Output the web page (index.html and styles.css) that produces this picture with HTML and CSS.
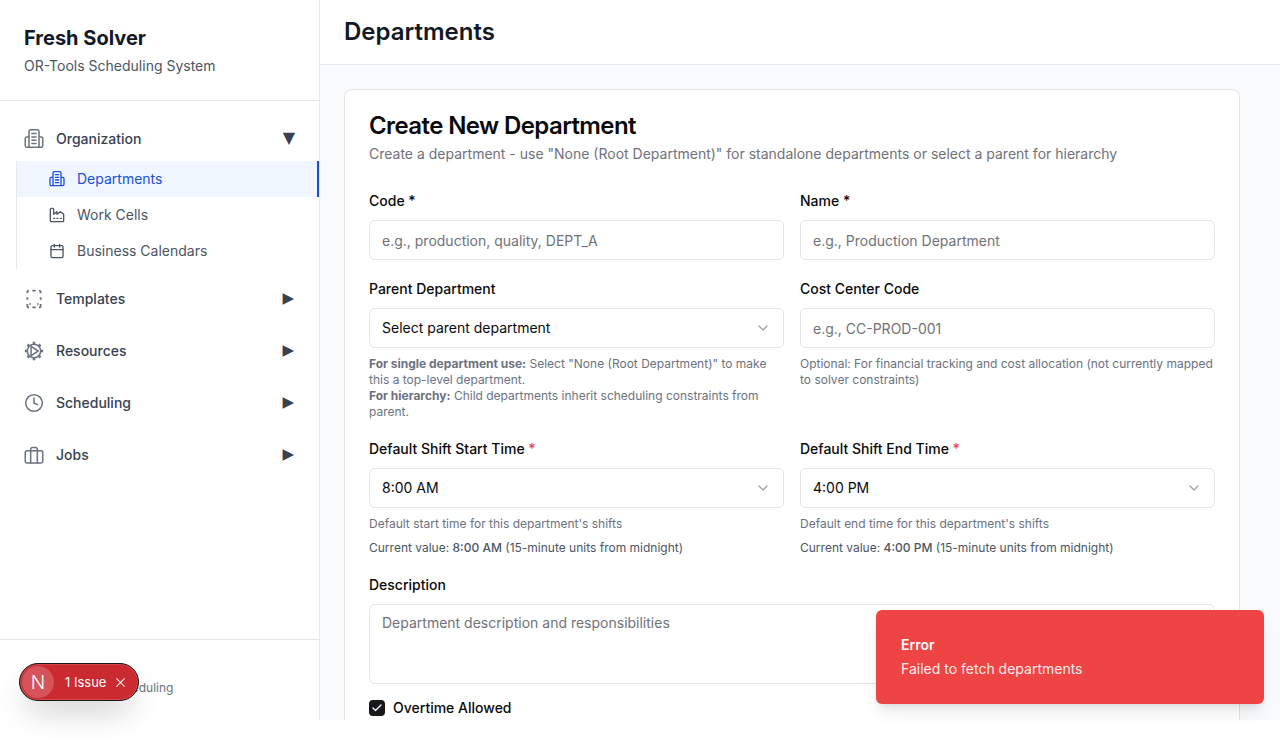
FILE: index.html
```html
<!DOCTYPE html>
<html>
    <head>
        <meta charset="utf-8">
        <title>Fresh Solver</title>
        <link rel="stylesheet" href="styles.css">
    </head>

    <body>
        <div class="app">
            <aside class="sidebar">
                <div class="brand">
                    <h2>Fresh Solver</h2>
                    <p>OR-Tools Scheduling System</p>
                </div>

                <nav class="nav">
                    <div class="nav-row">
                        <svg class="nav-icon" viewBox="0 0 24 24"><path d="M6 22V3a2 2 0 0 1 2-2h8a2 2 0 0 1 2 2v19M6 9.500H3.500a2 2 0 0 0-2 2V20a2 2 0 0 0 2 2h17a2 2 0 0 0 2-2v-8.500a2 2 0 0 0-2-2H18M9.500 5.500h5M9.500 9.500h5M9.500 13.500h5M9.500 17.500h5"/></svg>
                        <span class="nav-label">Organization</span>
                        <span class="nav-arrow">▼</span>
                    </div>
                    <div class="sub-list">
                        <a class="sub-item active">
                            <svg class="sub-icon" viewBox="0 0 24 24"><path d="M6 22V3a2 2 0 0 1 2-2h8a2 2 0 0 1 2 2v19M6 9.500H3.500a2 2 0 0 0-2 2V20a2 2 0 0 0 2 2h17a2 2 0 0 0 2-2v-8.500a2 2 0 0 0-2-2H18M9.500 5.500h5M9.500 9.500h5M9.500 13.500h5M9.500 17.500h5"/></svg>
                            <span class="sub-label">Departments</span>
                        </a>
                        <a class="sub-item">
                            <svg class="sub-icon" viewBox="0 0 24 24"><path d="M2 3.500A1.500 1.500 0 0 1 3.500 2h2A1.500 1.500 0 0 1 7 3.500V11l5-4v4l5-4 5 4v9.500a1.500 1.500 0 0 1-1.500 1.500h-17A1.500 1.500 0 0 1 2 20.500ZM7 17h1.500M12 17h1.500M17 17h1.500"/></svg>
                            <span class="sub-label">Work Cells</span>
                        </a>
                        <a class="sub-item">
                            <svg class="sub-icon" viewBox="0 0 24 24"><rect x="3" y="4" width="18" height="18" rx="2"/><path d="M16 2v4M8 2v4M3 10h18"/></svg>
                            <span class="sub-label">Business Calendars</span>
                        </a>
                    </div>

                    <div class="nav-row">
                        <svg class="nav-icon icon-dash" viewBox="0 0 24 24"><path d="M6 2a2 2 0 0 0-2 2v1M10 2h4M18 2a2 2 0 0 1 2 2v1M20 10v3M4 10v3M4 18v2a2 2 0 0 0 2 2M10 22h4M18 22a2 2 0 0 0 2-2v-2M6.500 18H8M16 18h1.500"/></svg>
                        <span class="nav-label">Templates</span>
                        <span class="nav-arrow closed">▶</span>
                    </div>
                    <div class="nav-row">
                        <svg class="nav-icon" viewBox="0 0 24 24"><circle cx="12" cy="12" r="8"/><path class="gear-teeth" d="M12 1v3M12 20v3M1 12h3M20 12h3M4.200 4.200l2.100 2.100M17.700 17.700l2.100 2.100M4.200 19.800l2.100-2.100M17.700 6.300l2.100-2.100"/><path d="M8.500 6.500v11L17 12z"/></svg>
                        <span class="nav-label">Resources</span>
                        <span class="nav-arrow closed">▶</span>
                    </div>
                    <div class="nav-row">
                        <svg class="nav-icon" viewBox="0 0 24 24"><circle cx="12" cy="12" r="10"/><path d="M12 6v6l4 2"/></svg>
                        <span class="nav-label">Scheduling</span>
                        <span class="nav-arrow closed">▶</span>
                    </div>
                    <div class="nav-row">
                        <svg class="nav-icon" viewBox="0 0 24 24"><rect x="1.500" y="7" width="21" height="14.500" rx="2"/><path d="M16 21.500V5a2 2 0 0 0-2-2h-4a2 2 0 0 0-2 2v16.500"/></svg>
                        <span class="nav-label">Jobs</span>
                        <span class="nav-arrow closed">▶</span>
                    </div>
                </nav>

                <div class="sidebar-footer">Manufacturing Scheduling</div>
            </aside>

            <div class="content">
                <header class="topbar">
                    <h1>Departments</h1>
                </header>

                <main class="main">
                    <section class="card">
                        <h3>Create New Department</h3>
                        <p class="card-sub">Create a department - use "None (Root Department)" for standalone departments or select a parent for hierarchy</p>

                        <form class="form">
                            <div class="form-row">
                                <div class="field">
                                    <label>Code *</label>
                                    <input type="text" placeholder="e.g., production, quality, DEPT_A">
                                </div>
                                <div class="field">
                                    <label>Name *</label>
                                    <input type="text" placeholder="e.g., Production Department">
                                </div>
                            </div>

                            <div class="form-row">
                                <div class="field">
                                    <label>Parent Department</label>
                                    <div class="select">
                                        <span class="select-text">Select parent department</span>
                                        <svg viewBox="0 0 24 24"><path d="m6 9 6 6 6-6"/></svg>
                                    </div>
                                    <p class="hint"><b>For single department use:</b> Select "None (Root Department)" to make this a top-level department.<br><b>For hierarchy:</b> Child departments inherit scheduling constraints from parent.</p>
                                </div>
                                <div class="field">
                                    <label>Cost Center Code</label>
                                    <input type="text" placeholder="e.g., CC-PROD-001">
                                    <p class="hint">Optional: For financial tracking and cost allocation (not currently mapped to solver constraints)</p>
                                </div>
                            </div>

                            <div class="form-row">
                                <div class="field">
                                    <label>Default Shift Start Time <span class="req">*</span></label>
                                    <div class="select">
                                        <span class="select-text">8:00 AM</span>
                                        <svg viewBox="0 0 24 24"><path d="m6 9 6 6 6-6"/></svg>
                                    </div>
                                    <p class="hint">Default start time for this department's shifts</p>
                                    <p class="current">Current value: <b>8:00 AM</b> (15-minute units from midnight)</p>
                                </div>
                                <div class="field">
                                    <label>Default Shift End Time <span class="req">*</span></label>
                                    <div class="select">
                                        <span class="select-text">4:00 PM</span>
                                        <svg viewBox="0 0 24 24"><path d="m6 9 6 6 6-6"/></svg>
                                    </div>
                                    <p class="hint">Default end time for this department's shifts</p>
                                    <p class="current">Current value: <b>4:00 PM</b> (15-minute units from midnight)</p>
                                </div>
                            </div>

                            <div class="field">
                                <label>Description</label>
                                <textarea placeholder="Department description and responsibilities"></textarea>
                            </div>

                            <div class="check-row">
                                <span class="checkbox">
                                    <svg viewBox="0 0 24 24"><path d="M20 6 9 17l-5-5"/></svg>
                                </span>
                                Overtime Allowed
                            </div>
                        </form>
                    </section>
                </main>
            </div>
        </div>

        <!-- dev overlay and toast sit over the page -->
        <div class="issue-badge">
            <span class="issue-logo">N</span>
            <span class="issue-text">1 Issue</span>
            <svg viewBox="0 0 24 24"><path d="M3 3l18 18M21 3 3 21"/></svg>
        </div>

        <div class="toast">
            <div class="toast-title">Error</div>
            <div class="toast-text">Failed to fetch departments</div>
        </div>
    </body>
</html>
```

FILE: styles.css
```css
* {
    box-sizing: border-box;
}

html, body {
    margin: 0;
    height: 748px;
    overflow: hidden;
    background-color: #fff;
    font-family: Inter, "Liberation Sans", sans-serif;
}

h1, h2, h3, p {
    margin: 0;
}

.app {
    display: flex;
    height: 720px;
    overflow: hidden;
}

/* Style the sidebar */
.sidebar {
    display: flex;
    flex-direction: column;
    flex: 0 0 320px;
    background-color: #fff;
    border-right: 1px solid #e5e7eb;
}

.brand {
    height: 101px;
    padding: 24px 24px 0;
    border-bottom: 1px solid #e5e7eb;
}

.brand h2 {
    font-size: 20px;
    line-height: 28px;
    font-weight: 700;
    color: #111827;
}

.brand p {
    margin-top: 4px;
    font-size: 14px;
    line-height: 20px;
    color: #4b5563;
}

.nav {
    flex: 1;
    display: flex;
    flex-direction: column;
    padding-top: 16px;
}

.nav-row {
    display: flex;
    align-items: center;
    gap: 12px;
    height: 44px;
    padding: 0 24px;
    margin-bottom: 8px;
    font-size: 14px;
    font-weight: 500;
    color: #374151;
}

.nav-label {
    flex: 1;
    padding-bottom: 2px;
}

.nav-arrow {
    padding-bottom: 3px;
    font-family: "DejaVu Sans", sans-serif;
    font-size: 16px;
    color: #374151;
}

.nav-arrow.closed {
    margin-right: 1px;
    font-size: 15px;
}

.nav-icon, .sub-icon {
    fill: none;
    stroke: #6b7280;
    stroke-width: 1.8;
    stroke-linecap: round;
    stroke-linejoin: round;
}

.nav-icon {
    width: 20px;
    height: 20px;
}

.icon-dash {
    stroke-width: 2.2;
    stroke-linecap: butt;
}

.gear-teeth {
    stroke-width: 3;
    stroke-linecap: butt;
}

.sub-icon {
    width: 16px;
    height: 16px;
    stroke: #4b5563;
    stroke-width: 2;
}

.sub-label {
    padding-bottom: 2px;
}

.sub-list {
    margin: -8px 0 8px 16px;
    border-left: 1px solid #e5e7eb;
}

.sub-item {
    display: flex;
    align-items: center;
    gap: 12px;
    height: 36px;
    padding-left: 32px;
    font-size: 14px;
    color: #4b5563;
}

.sub-item.active {
    background-color: #eff6ff;
    color: #1d4ed8;
    border-right: 2px solid #1d4ed8;
}

.sub-item.active .sub-icon {
    stroke: #1d4ed8;
}

.sidebar-footer {
    height: 81px;
    padding: 40px 24px 0;
    border-top: 1px solid #e5e7eb;
    font-size: 12px;
    line-height: 16px;
    color: #6b7280;
}

/* Style the main section */
.content {
    flex: 1;
    display: flex;
    flex-direction: column;
    min-width: 0;
}

.topbar {
    height: 65px;
    padding: 17px 24px 0;
    background-color: #fff;
    border-bottom: 1px solid #e5e7eb;
}

.topbar h1 {
    font-size: 24px;
    line-height: 30px;
    font-weight: 600;
    color: #111827;
}

.main {
    flex: 1;
    padding: 24px;
    background-color: #f9fafb;
    overflow: hidden;
}

.card {
    width: 896px;
    padding: 24px;
    background-color: #fff;
    border: 1px solid #e4e4e7;
    border-radius: 8px;
}

.card h3 {
    font-size: 24px;
    line-height: 24px;
    font-weight: 600;
    letter-spacing: -0.6px;
    color: #09090b;
}

.card-sub {
    margin-top: 6px;
    font-size: 14px;
    line-height: 20px;
    color: #71717a;
}

/* Style the form */
.form {
    display: flex;
    flex-direction: column;
    gap: 22px;
    margin-top: 30px;
}

.form-row {
    display: grid;
    grid-template-columns: 415px 415px;
    gap: 16px;
}

.field label {
    display: block;
    margin-bottom: 12px;
    font-size: 14px;
    line-height: 14px;
    font-weight: 500;
    color: #09090b;
}

.req {
    color: #ef4444;
}

.field input, .field textarea, .select {
    display: block;
    width: 100%;
    font-family: inherit;
    font-size: 14px;
    color: #09090b;
    background-color: #fff;
    border: 1px solid #e4e4e7;
    border-radius: 6px;
    padding: 0 12px;
}

.field input {
    height: 40px;
}

.field textarea {
    height: 80px;
    padding-top: 8px;
    line-height: 20px;
    resize: none;
}

.field input::placeholder, .field textarea::placeholder {
    color: #71717a;
    opacity: 1;
}

.select {
    display: flex;
    align-items: center;
    justify-content: space-between;
    height: 40px;
}

.select-text {
    padding-bottom: 2px;
}

.select svg {
    width: 16px;
    height: 16px;
    fill: none;
    stroke: #a1a1aa;
    stroke-width: 2;
    stroke-linecap: round;
    stroke-linejoin: round;
}

.hint {
    margin-top: 8px;
    font-size: 12px;
    line-height: 16px;
    color: #6b7280;
}

.hint b {
    font-weight: 700;
}

.current {
    margin-top: 8px;
    font-size: 12px;
    line-height: 16px;
    color: #4b5563;
}

.current b {
    font-weight: 500;
}

.check-row {
    display: flex;
    align-items: center;
    gap: 8px;
    margin-top: -6px;
    font-size: 14px;
    line-height: 16px;
    font-weight: 500;
    color: #09090b;
}

.checkbox {
    display: flex;
    align-items: center;
    justify-content: center;
    width: 16px;
    height: 16px;
    background-color: #18181b;
    border-radius: 4px;
}

.checkbox svg {
    width: 12px;
    height: 12px;
    fill: none;
    stroke: #fff;
    stroke-width: 2.5;
    stroke-linecap: round;
    stroke-linejoin: round;
}

/* Style the dev badge */
.issue-badge {
    position: absolute;
    left: 19px;
    top: 663px;
    display: flex;
    align-items: center;
    width: 120px;
    height: 38px;
    padding: 0 0 0 2px;
    background-color: #ca2a30;
    border: 1px solid #171717;
    border-radius: 19px;
    box-shadow: inset 0 0 0 1px rgba(255, 255, 255, 0.15), 0 16px 32px -8px rgba(0, 0, 0, 0.24);
}

.issue-logo {
    display: flex;
    align-items: center;
    justify-content: center;
    width: 32px;
    height: 32px;
    border-radius: 50%;
    background-color: rgba(255, 255, 255, 0.2);
    font-size: 19px;
    font-weight: 300;
    color: #fff;
}

.issue-text {
    margin-left: 11px;
    font-size: 13px;
    color: #fff;
}

.issue-badge svg {
    width: 11px;
    height: 11px;
    margin-left: 9px;
    fill: none;
    stroke: #fff;
    stroke-width: 2.2;
}

/* Style the toast */
.toast {
    position: absolute;
    left: 876px;
    top: 610px;
    width: 388px;
    height: 94px;
    padding: 25px 25px 0;
    background-color: #ef4444;
    border-radius: 6px;
    box-shadow: 0 10px 15px -3px rgba(0, 0, 0, 0.1), 0 4px 6px -4px rgba(0, 0, 0, 0.1);
    color: #fff;
    font-size: 14px;
    line-height: 20px;
}

.toast-title {
    font-weight: 600;
}

.toast-text {
    margin-top: 4px;
    opacity: 0.9;
}
```
